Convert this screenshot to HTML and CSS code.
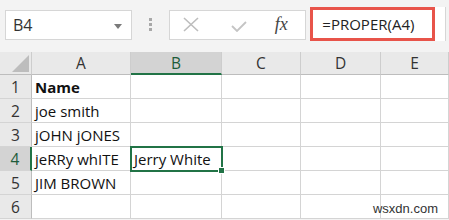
FILE: index.html
```html
<!DOCTYPE html>
<html lang="en">
<head>
    <meta charset="UTF-8">
    <title>PROPER</title>
    <link rel="stylesheet" href="styles.css">
</head>
<body>
    <div id="formulabar">
        <div class="namebox">
            <span>B4</span>
            <svg class="arrow" width="8" height="5" viewBox="0 0 8 5"><path d="M0 0h8L4 5z" fill="#7a7a7a"/></svg>
        </div>
        <div class="grip"><i></i><i></i><i></i></div>
        <div class="buttons">
            <svg class="cancel" width="16" height="15" viewBox="0 0 16 15"><path d="M1 1L15 14M15 1L1 14" stroke="#bdbdbd" stroke-width="1.6"/></svg>
            <svg class="enter" width="16" height="11" viewBox="0 0 16 11"><path d="M1 5L6 10L15 1" stroke="#c4c4c4" stroke-width="1.8" fill="none"/></svg>
            <span class="fx">fx</span>
        </div>
        <div class="formula"><span class="highlight">=PROPER(A4)</span></div>
    </div>
    <div id="sheet">
        <div class="head corner"><svg width="17" height="17" viewBox="0 0 17 17"><path d="M17 0V17H0z" fill="#bdbdbd"/></svg></div>
        <div class="head">A</div>
        <div class="head selected">B</div>
        <div class="head">C</div>
        <div class="head">D</div>
        <div class="head">E</div>

        <div class="head row">1</div>
        <div class="cell bold">Name</div>
        <div class="cell"></div><div class="cell"></div><div class="cell"></div><div class="cell"></div>

        <div class="head row">2</div>
        <div class="cell">joe smith</div>
        <div class="cell"></div><div class="cell"></div><div class="cell"></div><div class="cell"></div>

        <div class="head row">3</div>
        <div class="cell">jOHN jONES</div>
        <div class="cell"></div><div class="cell"></div><div class="cell"></div><div class="cell"></div>

        <div class="head row selected">4</div>
        <div class="cell">jeRRy whITE</div>
        <div class="cell active">Jerry White<i class="handle"></i></div>
        <div class="cell"></div><div class="cell"></div><div class="cell"></div>

        <div class="head row">5</div>
        <div class="cell">JIM BROWN</div>
        <div class="cell"></div><div class="cell"></div><div class="cell"></div><div class="cell"></div>

        <div class="head row">6</div>
        <div class="cell"></div>
        <div class="cell"></div><div class="cell"></div><div class="cell"></div>
        <div class="cell"><span class="mark">wsxdn.com</span></div>
    </div>
</body>
</html>
```
FILE: styles.css
```css
body {
    margin: 0;
    overflow: hidden;
    font-family: 'Open Sans', sans-serif;
    background-color: #f3f3f3;
    width: 449px;
    height: 220px;
}
#formulabar {
    height: 52px;
    display: flex;
    align-items: flex-start;
    padding: 10px 3px 0 5px;
    box-sizing: border-box;
}
.namebox {
    width: 127px;
    height: 30px;
    box-sizing: border-box;
    background-color: #fff;
    border: 1px solid #d6d6d6;
    display: flex;
    align-items: center;
    justify-content: space-between;
    padding: 0 9px 0 7px;
    font-size: 16px;
    color: #333;
}
.namebox .arrow {
    margin-top: 2px;
}
.grip {
    width: 37px;
    display: flex;
    flex-direction: column;
    align-items: center;
    gap: 2px;
    padding-top: 8px;
}
.grip i {
    width: 3px;
    height: 3px;
    background-color: #a8a8a8;
}
.buttons {
    width: 138px;
    height: 30px;
    box-sizing: border-box;
    background-color: #fff;
    border: 1px solid #d6d6d6;
    display: flex;
    align-items: center;
    padding-left: 13px;
}
.buttons .cancel {
    margin-top: -1px;
}
.buttons .enter {
    margin-left: 32px;
    margin-top: 3px;
}
.fx {
    font-family: 'Liberation Serif', serif;
    font-style: italic;
    font-size: 18px;
    color: #444;
    margin-left: 28px;
    margin-top: -2px;
}
.formula {
    margin-left: 4px;
    margin-top: -3px;
    width: 135px;
    height: 34px;
    background-color: #fff;
    border-right: 1px solid #d6d6d6;
}
.highlight {
    display: flex;
    align-items: center;
    width: 125px;
    height: 34px;
    box-sizing: border-box;
    border: 3px solid #e8544a;
    padding-left: 9px;
    font-size: 15px;
    color: #222;
}
#sheet {
    display: grid;
    grid-template-columns: 32px 99px 91px 79px 80px 68px;
    grid-template-rows: 23px repeat(6, 24px);
    background-color: #fff;
    font-size: 15px;
    color: #111;
}
.head {
    background-color: #e9e9e9;
    border-right: 1px solid #cdcdcd;
    border-bottom: 1px solid #bdbdbd;
    display: flex;
    align-items: center;
    justify-content: center;
    font-size: 15.5px;
    color: #333;
}
.corner {
    align-items: flex-end;
    justify-content: flex-end;
    padding: 0 2px 2px 0;
}
.head.selected {
    background-color: #d3d3d3;
    color: #1e5c3a;
    border-bottom: 2px solid #217346;
}
.head.row {
    border-bottom: 1px solid #d4d4d4;
    border-right: 1px solid #bdbdbd;
}
.head.row.selected {
    border-bottom: 1px solid #d4d4d4;
    border-right: 2px solid #217346;
}
.cell {
    border-right: 1px solid #d4d4d4;
    border-bottom: 1px solid #d4d4d4;
    display: flex;
    align-items: center;
    padding-left: 3px;
    white-space: nowrap;
    position: relative;
}
.bold {
    font-weight: bold;
}
.active {
    outline: 2px solid #217346;
    outline-offset: -1px;
    z-index: 1;
}
.handle {
    position: absolute;
    right: -4px;
    bottom: -4px;
    width: 5px;
    height: 5px;
    background-color: #217346;
    border: 1px solid #fff;
}
.mark {
    position: absolute;
    right: 10px;
    bottom: 2px;
    font-family: 'Liberation Sans', sans-serif;
    font-size: 13px;
    color: #333;
}
```
